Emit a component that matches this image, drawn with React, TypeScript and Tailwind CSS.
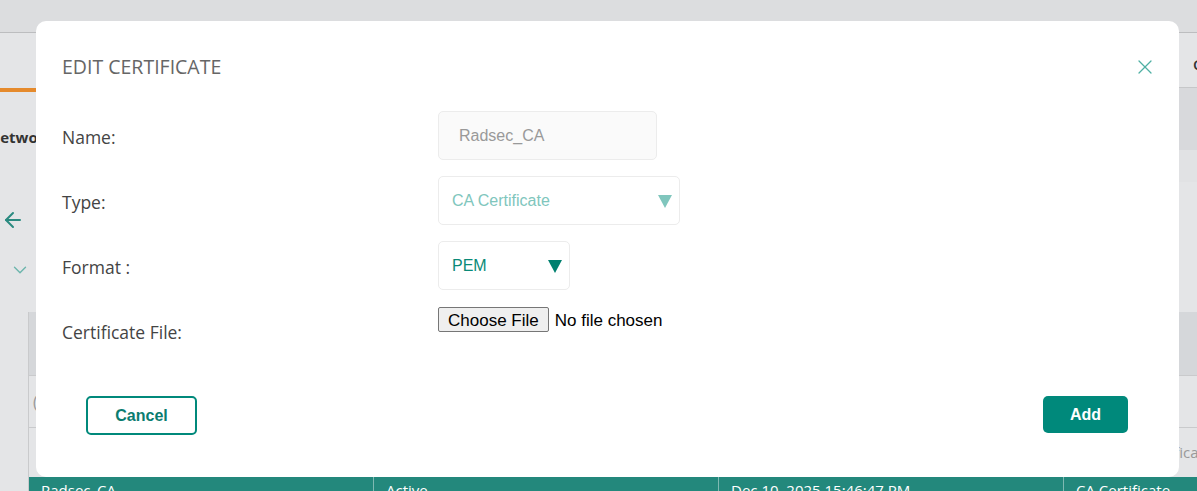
import { ArrowLeft, ChevronDown, X } from "lucide-react";

const labelCls = "flex h-[49px] items-center pt-[3px] font-['Open_Sans',sans-serif] text-[17.5px] text-[#444]";

function Field({ label, children }: { label: string; children: React.ReactNode }) {
  return (
    <div className="flex h-[49px]">
      <div className={`${labelCls} w-[376px]`}>{label}</div>
      <div className="flex-1">{children}</div>
    </div>
  );
}

function Caret({ light }: { light?: boolean }) {
  return (
    <svg width="14" height="14" viewBox="0 0 14 14" className="shrink-0">
      <path d="M0 1h14L7 14z" fill={light ? "#80c6bd" : "#00806f"} />
    </svg>
  );
}

export default function App() {
  return (
    <div className="relative h-[491px] w-full overflow-hidden bg-[#e4e5e7] font-['Open_Sans',sans-serif]">
      {/* page behind the dialog, dimmed */}
      <div className="h-[33px] border-b border-[#bcbdbf] bg-[#dcdddf]" />
      <div className="flex h-[55px]">
        <div className="flex-1" />
        <div className="w-[18px] overflow-hidden whitespace-nowrap border-b border-[#c6c7c9] pl-[14px] pt-[20px] text-[15px] font-semibold text-[#333]">
          Certificates
        </div>
      </div>
      <div className="flex h-[94px]">
        <div className="w-[200px]">
          <div className="h-[4px] bg-[#e58a2c]" />
          <div className="-ml-[12px] pt-[34px] text-[15px] font-bold text-[#333]">Network</div>
        </div>
        <div className="flex-1" />
        <div className="flex w-[18px] flex-col">
          <div className="h-[62px] bg-[#d8d9dc]" />
          <div className="flex-1 bg-[#e1e2e4]" />
        </div>
      </div>
      <div className="flex h-[130px] flex-col pl-[1px]">
        <ArrowLeft size={24} strokeWidth={2} className="mt-[26px] text-[#2a8a80]" />
        <ChevronDown size={22} strokeWidth={1.5} className="ml-[8px] mt-[27px] text-[#6bb5ac]" />
      </div>
      <div className="ml-[28px] border-l border-[#c9cacc]">
        <div className="h-[63px] bg-[#d5d7da]" />
        <div className="flex h-[52px] items-center border-t border-[#c9cacc] pl-[4px] text-[#999]">(</div>
        <div className="flex h-[50px] items-center border-t border-[#c9cacc] text-[15px] text-[#999]">
          <div className="w-[1112px] shrink-0" />
          <div className="shrink-0 whitespace-nowrap">Certificate</div>
        </div>
        <div className="flex h-[20px] bg-[#23887c] text-[15px] text-white">
          {["Radsec_CA", "Active", "Dec 10, 2025 15:46:47 PM", "CA Certificate"].map((t, i) => (
            <div key={i} className="w-[345px] shrink-0 whitespace-nowrap border-r border-[#7fb9b2] pl-[12px] pt-[3px] leading-[20px]">
              {t}
            </div>
          ))}
        </div>
      </div>

      {/* edit certificate dialog */}
      <div className="absolute left-[36px] top-[21px] flex h-[456px] w-[1143px] flex-col rounded-[10px] bg-white pl-[26px]">
        <div className="flex items-center justify-between pr-[22px] pt-[34px]">
          <h2 className="text-[19.5px] leading-[24px] text-[#666]">EDIT CERTIFICATE</h2>
          <X size={24} strokeWidth={1.3} className="text-[#4fb0a4]" />
        </div>

        <div className="mt-[32px] flex flex-col gap-[16px] font-['Liberation_Sans',Arial,sans-serif]">
          <Field label="Name:">
            <div className="flex h-[49px] w-[219px] items-center rounded-[5px] border border-[#ececec] bg-[#fafafa] pl-[20px] text-[16px] text-[#999]">
              Radsec_CA
            </div>
          </Field>
          <Field label="Type:">
            <div className="flex h-[49px] w-[242px] items-center justify-between rounded-[5px] border border-[#ececec] pl-[13px] pr-[7px] text-[16px] text-[#80c6bd]">
              CA Certificate
              <Caret light />
            </div>
          </Field>
          <Field label="Format :">
            <div className="flex h-[49px] w-[132px] items-center justify-between rounded-[5px] border border-[#ececec] pl-[13px] pr-[7px] text-[16px] text-[#0a8a78]">
              PEM
              <Caret />
            </div>
          </Field>
          <Field label="Certificate File:">
            <input
              type="file"
              className="mt-[1px] text-[17px] text-black file:mr-[6px] file:h-[25px] file:rounded-[2px] file:border file:border-[#767676] file:bg-[#efefef] file:px-[9px] file:text-[17px] file:text-black"
            />
          </Field>
        </div>

        <div className="mt-[41px] flex items-start justify-between pl-[24px] pr-[51px] font-['Liberation_Sans',Arial,sans-serif]">
          <button className="h-[39px] w-[111px] rounded-[5px] border-2 border-[#00897b] text-[16px] font-bold text-[#0b7c70]">
            Cancel
          </button>
          <button className="h-[37px] w-[85px] rounded-[5px] bg-[#00897b] text-[16px] font-bold text-white">Add</button>
        </div>
      </div>
    </div>
  );
}
